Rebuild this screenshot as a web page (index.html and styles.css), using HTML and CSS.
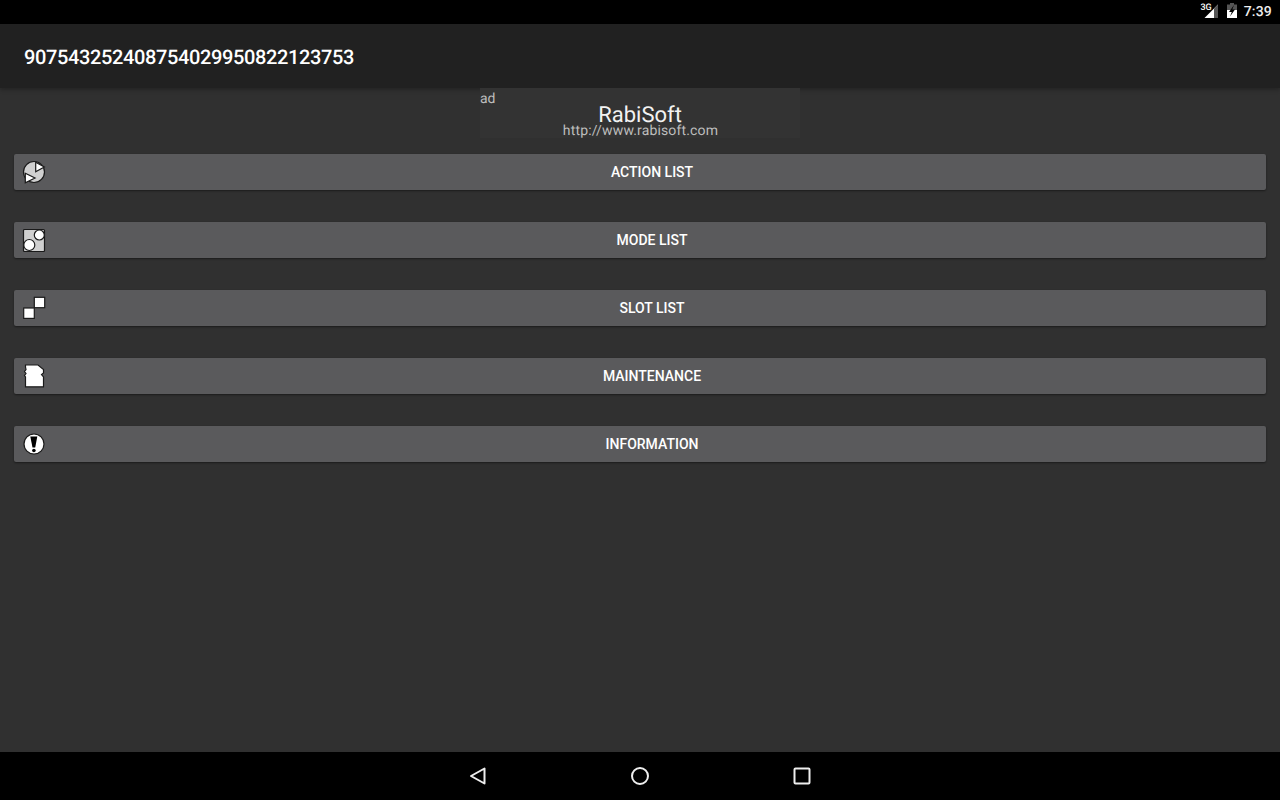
FILE: index.html
```html
<!DOCTYPE html>
<html lang="en">
<head>
  <meta charset="UTF-8">
  <title>RabiSoft</title>
  <link rel="stylesheet" href="styles.css">
</head>
<body>
  <div class="status-bar">
    <span class="net-label">3G</span>
    <svg class="signal" width="14" height="14" viewBox="0 0 14 14">
      <path d="M14 0.500V14H0.500Z" fill="#fff"/>
      <path d="M14 0.500V14H10V4.500Z" fill="#555"/>
    </svg>
    <svg class="battery" width="12" height="15" viewBox="0 0 12 15">
      <path d="M4 0H8V1.500H11V7H1V1.500H4Z" fill="#555"/>
      <path d="M1 7H11V15H1Z" fill="#fff"/>
      <path d="M8 2L3 9H5.800L4 13.500L9 6.500H6.300Z" fill="#000"/>
    </svg>
    <span class="clock">7:39</span>
  </div>

  <header class="app-bar">907543252408754029950822123753</header>

  <main class="content">
    <div class="ad">
      <span class="ad-label">ad</span>
      <span class="ad-name">RabiSoft</span>
      <span class="ad-url">http://www.rabisoft.com</span>
    </div>

    <div class="menu">
      <button class="menu-btn">
        <svg class="menu-icon" width="24" height="24" viewBox="0 0 24 24">
          <circle cx="12" cy="12" r="10.500" fill="#d0d0d0" stroke="#1a1a1a" stroke-width="1.200"/>
          <path d="M13.700 2.300L22.300 7L13.700 11.700Z" fill="#fff" stroke="#1a1a1a" stroke-width="1.200"/>
          <path d="M3.300 13.300L13 18L3.300 22.700Z" fill="#fff" stroke="#1a1a1a" stroke-width="1.200"/>
        </svg>
        ACTION LIST
      </button>
      <button class="menu-btn">
        <svg class="menu-icon" width="24" height="24" viewBox="0 0 24 24">
          <rect x="1.500" y="1.500" width="21" height="22" rx="1" fill="#d0d0d0" stroke="#1a1a1a" stroke-width="1.200"/>
          <circle cx="17.300" cy="7" r="5" fill="#fff" stroke="#1a1a1a" stroke-width="1.200"/>
          <circle cx="7.300" cy="17" r="5.500" fill="#fff" stroke="#1a1a1a" stroke-width="1.200"/>
        </svg>
        MODE LIST
      </button>
      <button class="menu-btn">
        <svg class="menu-icon" width="24" height="24" viewBox="0 0 24 24">
          <rect x="12.300" y="1.300" width="10.400" height="10.400" fill="#fff" stroke="#1a1a1a" stroke-width="1.200"/>
          <rect x="1.700" y="12" width="10.600" height="10.400" fill="#fff" stroke="#1a1a1a" stroke-width="1.200"/>
        </svg>
        SLOT LIST
      </button>
      <button class="menu-btn">
        <svg class="menu-icon" width="24" height="24" viewBox="0 0 24 24">
          <path d="M3.500 1H16L21.500 5.500V9L19.500 10.500L21.500 13V22.800H3.500V13L2.500 11.500L4 9.500L2.500 7.500L4 5.500L3.500 3Z" fill="#fff" stroke="#1a1a1a" stroke-width="1.200"/>
        </svg>
        MAINTENANCE
      </button>
      <button class="menu-btn">
        <svg class="menu-icon" width="24" height="24" viewBox="0 0 24 24">
          <circle cx="12" cy="12" r="10" fill="#fff" stroke="#1a1a1a" stroke-width="1.200"/>
          <path d="M8.300 4.500H15.300L13.200 15.500H10.500Z" fill="#000"/>
          <circle cx="11.900" cy="18.500" r="1.800" fill="#000"/>
        </svg>
        INFORMATION
      </button>
    </div>
  </main>

  <nav class="nav-bar">
    <svg width="18" height="18" viewBox="0 0 18 18">
      <path d="M15.500 1.500V16.500L2 9Z" fill="none" stroke="#eee" stroke-width="2" stroke-linejoin="round"/>
    </svg>
    <svg width="18" height="18" viewBox="0 0 18 18">
      <circle cx="9" cy="9" r="8" fill="none" stroke="#eee" stroke-width="2"/>
    </svg>
    <svg width="18" height="18" viewBox="0 0 18 18">
      <rect x="1.500" y="1.500" width="15" height="15" rx="1" fill="none" stroke="#eee" stroke-width="2"/>
    </svg>
  </nav>
</body>
</html>
```

FILE: styles.css
```css
html, body {
  height: 100%;
}
body {
  margin: 0;
  display: flex;
  flex-direction: column;
  font-family: Roboto, "Liberation Sans", sans-serif;
  text-rendering: geometricPrecision;
  background-color: #303030;
  color: #fff;
  overflow: hidden;
}
.status-bar {
  height: 24px;
  flex: none;
  display: flex;
  align-items: flex-start;
  justify-content: flex-end;
  padding-right: 8px;
  background-color: #000;
}
.net-label {
  margin-top: 4px;
  margin-right: -8px;
  font-size: 9px;
  line-height: 9px;
  font-weight: 500;
  position: relative;
}
.signal {
  margin-top: 4px;
}
.battery {
  margin-top: 3px;
  margin-left: 8px;
}
.clock {
  margin-left: 6px;
  font-size: 14px;
  line-height: 24px;
  font-weight: 500;
  letter-spacing: 0.2px;
  color: #eee;
}
.app-bar {
  height: 64px;
  flex: none;
  display: flex;
  align-items: center;
  padding: 2px 0 0 24px;
  box-sizing: border-box;
  font-size: 20px;
  font-weight: 500;
  letter-spacing: -0.37px;
  background-color: #212121;
  box-shadow: 0 2px 4px rgba(0, 0, 0, 0.25);
  position: relative;
}
.content {
  flex: 1;
  display: flex;
  flex-direction: column;
  align-items: center;
}
.ad {
  width: 320px;
  height: 50px;
  position: relative;
  display: flex;
  flex-direction: column;
  align-items: center;
  background-color: #333;
}
.ad-label {
  position: absolute;
  left: 0;
  top: 3px;
  font-size: 14px;
  line-height: 16px;
  color: #bdbdbd;
}
.ad-name {
  margin-top: 15px;
  font-size: 22px;
  line-height: 26px;
  color: #f2f2f2;
}
.ad-url {
  margin-top: -6px;
  margin-left: 1px;
  font-size: 14px;
  line-height: 16px;
  letter-spacing: 0.15px;
  color: #bdbdbd;
}
.menu {
  align-self: stretch;
  display: flex;
  flex-direction: column;
  gap: 32px;
  margin-top: 16px;
  padding: 0 14px;
}
.menu-btn {
  height: 36px;
  display: flex;
  align-items: center;
  justify-content: center;
  position: relative;
  padding: 0 0 0 24px;
  border: none;
  border-radius: 2px;
  background-color: #5a5a5c;
  box-shadow: 0 1px 2px rgba(0, 0, 0, 0.45);
  color: #fff;
  font-family: inherit;
  font-size: 14px;
  font-weight: 500;
}
.menu-icon {
  position: absolute;
  left: 8px;
  top: 6px;
}
.nav-bar {
  height: 48px;
  flex: none;
  display: flex;
  align-items: center;
  justify-content: center;
  gap: 144px;
  background-color: #000;
}
```
